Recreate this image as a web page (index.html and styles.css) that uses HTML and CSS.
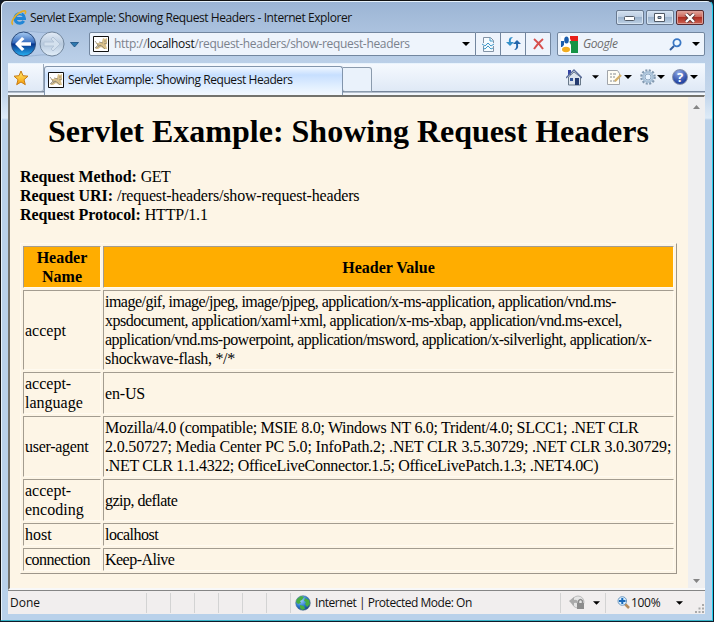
FILE: index.html
```
<!DOCTYPE html>
<html lang="en">
<head>
<meta charset="utf-8">
<title>Servlet Example: Showing Request Headers</title>
<link rel="stylesheet" href="styles.css">
</head>
<body>
<svg class="defs" width="0" height="0" aria-hidden="true">
  <defs>
    <linearGradient id="orb" x1="0" y1="0" x2="0" y2="1"><stop offset="0" stop-color="#a9cdf3"/><stop offset=".45" stop-color="#3269bd"/><stop offset=".5" stop-color="#07338b"/><stop offset="1" stop-color="#28b5f5"/></linearGradient>
    <linearGradient id="glass" x1="0" y1="0" x2="0" y2="1"><stop offset="0" stop-color="#e3ecf7"/><stop offset=".5" stop-color="#b8cade"/><stop offset="1" stop-color="#e3effa"/></linearGradient>
    <linearGradient id="gold" x1="0" y1="0" x2="0" y2="1"><stop offset="0" stop-color="#ffed72"/><stop offset="1" stop-color="#f79b05"/></linearGradient>
    <radialGradient id="sea" cx=".35" cy=".3" r=".75"><stop offset="0" stop-color="#a5d6ff"/><stop offset=".6" stop-color="#2878ce"/><stop offset="1" stop-color="#164581"/></radialGradient>
    <symbol id="cat" viewBox="0 0 16 16"><path fill="#fff" stroke="#111" d="M.5.5h15v15H.5z"/><path fill="#d9c08a" d="M5 7l4-1 1-4 2 1 2-1v5l-1 2 1 4h-3l-3-2-3 2H2l3-3-2-3z"/><path fill="none" stroke="#8f8877" stroke-width=".8" d="M2 5l3 4-3 3m4-6l4 1M5 9l4 1 3 3M3 12l5-3m3-4h2m-2 3l3-1"/></symbol>
    <symbol id="down" viewBox="0 0 8 4"><path d="M0 0h8L4 4z"/></symbol>
  </defs>
</svg>
<div class="window">
  <header class="title-bar">
    <svg class="ie" width="16" height="16" viewBox="0 0 16 16"><path fill="none" stroke="#2186d6" stroke-width="3" d="M12.8 11A4.800 4.800 0 1 1 13.500 8.500H4"/><path fill="none" stroke="#7bcafa" stroke-width=".8" d="M4 7a4.500 4.500 0 0 1 7-3"/><path fill="none" stroke="#e5ad24" stroke-width="1.600" d="M2 14.500C-1 13 3 6 8 3s8-3 6 1"/></svg>
    <span class="title">Servlet Example: Showing Request Headers - Internet Explorer</span>
    <div class="controls">
      <span class="control"><svg width="12" height="6" viewBox="0 0 12 6"><rect x=".5" y="1.500" width="10" height="4" rx="1" fill="#fff" stroke="#505965"/></svg></span>
      <span class="control"><svg width="12" height="10" viewBox="0 0 12 10"><path fill="#fff" fill-rule="evenodd" stroke="#505965" d="M.5.5h10v8h-10zM4 3.500v2h3v-2z"/></svg></span>
      <span class="control close"><svg width="12" height="10" viewBox="0 0 12 10"><path fill="none" stroke="#5c3335" stroke-width="4" d="M2 1l8 8M10 1L2 9"/><path fill="none" stroke="#fff" stroke-width="2.400" d="M2 1l8 8M10 1L2 9"/></svg></span>
    </div>
  </header>
  <nav class="address-row">
    <svg class="travel" width="71" height="26" viewBox="0 0 71 26"><path d="M12 1C22-1 27 3 41 1c8 0 11 5 12 12-1 7-5 12-12 12-10-3-18 1-29 0z" fill="#b4cae7" stroke="#9bb4d4"/><circle cx="12.500" cy="13" r="12" fill="url(#orb)" stroke="#2c4c7b"/><path fill="#fff" d="M11 6l2.500 2-3.500 3.200h10v3.600H10l3.500 3.200-2.500 2-7-7z"/><circle cx="41" cy="13" r="12" fill="url(#glass)" stroke="#75899f"/><path fill="#d4e1ee" stroke="#b3c4d7" d="M42 6l7 7-7 7-2-2 3-3H33v-4h10l-3-3z"/><path fill="#2e78ae" stroke="#184e80" stroke-width=".8" d="M59.500 11.500h8L63.500 16z"/></svg>
    <div class="address"><svg width="16" height="16"><use href="#cat"/></svg><span class="url">http://<b>localhost</b>/request-headers/show-request-headers</span><svg class="arrow" width="8" height="4"><use href="#down"/></svg></div>
    <div class="tool"><svg width="13" height="15" viewBox="0 0 13 15"><path fill="#f5fbff" stroke="#8293a6" d="M1.500 6V.5h7l3 3V6M1.500 9v5.500h10V9"/><path fill="none" stroke="#4099c7" d="M0 7l3 2 3-3 3 3 3-2M1 11l2 1 3-3 3 3 2-1M8 1v3h3"/></svg></div>
    <div class="tool"><svg width="15" height="14" viewBox="0 0 15 14"><path fill="#3490c9" d="M7 0Q2 0 3 5H0l4 4 4-4H5Q4 2 7 0z"/><path fill="#2467ab" d="M8 13q5 0 4-6h3l-4-4-4 4h3q1 4-2 6z"/></svg></div>
    <div class="tool last"><svg width="11" height="12" viewBox="0 0 11 12"><path fill="none" stroke="#d64f4d" stroke-width="2" d="M1 1q5 4 9 10M10 1Q5 5 1 11"/></svg></div>
    <div class="search">
      <svg width="17" height="17" viewBox="0 0 17 17"><path fill="#fff" d="M0 0h17v17H0z"/><path fill="#e8201b" d="M8 0h9v5H10z"/><path fill="#159345" d="M8 5h9v12h-7V9z"/><path fill="#1a5dad" d="M0 5h3v6H0z"/><path fill="#fff" d="M4 0h5v5l-2 3 3 4-1 5H3l-3-5 3-3V0z"/><ellipse cx="5.500" cy="4" rx="2.300" ry="3.500" fill="#1a5dad"/><ellipse cx="5" cy="13.500" rx="4" ry="2.700" fill="#f2ad20"/></svg>
      <span class="engine">Google</span>
      <svg class="lens" width="13" height="13" viewBox="0 0 13 13"><circle cx="8" cy="4.700" r="3.600" fill="#eff8ff" stroke="#3a77c4" stroke-width="1.800"/><path stroke="#315d9e" stroke-width="2" d="M5 8l-4 4"/></svg>
      <svg width="8" height="4"><use href="#down"/></svg>
    </div>
  </nav>
  <div class="tab-row">
    <div class="favorites"><svg width="16" height="16" viewBox="0 0 16 16"><path fill="url(#gold)" stroke="#c87d15" d="M8 1l2 4.700 5 .5-4 3.500 1.300 5L8 12l-4.300 2.700L5 9.700 1 6.200l5-.5z"/></svg></div>
    <div class="tab"><svg width="16" height="16"><use href="#cat"/></svg><span class="tab-title">Servlet Example: Showing Request Headers</span></div>
    <div class="new-tab"></div>
    <div class="commands">
      <svg width="16" height="17" viewBox="0 0 16 17"><path fill="#3544a3" d="M2 1h3v5H2z"/><path fill="#dce3ed" stroke="#697989" d="M2.500 8v8h12V8L8 3z"/><path fill="none" stroke="#5b6d9b" stroke-width="1.300" d="M0 9l8-8 8 8"/><path fill="#36579b" d="M4 9h3v3H4z"/><path fill="#253b70" d="M9 9h4v7H9z"/></svg>
      <svg class="arrow home-arrow" width="7" height="4"><use href="#down"/></svg>
      <svg class="feed" width="15" height="17" viewBox="0 0 15 17"><path fill="#fffdf5" stroke="#a1a5aa" d="M.5 1.500h10l2 3v11H.5z"/><path fill="none" stroke="#858b91" stroke-width="1.100" d="M3 5h2m1 0h3M3 8h2m1 0h2M3 12h2m1 0h3"/><path stroke="#d5b069" stroke-width="2.400" d="M14 6l-6 6"/></svg>
      <svg class="arrow" width="8" height="4"><use href="#down"/></svg>
      <svg class="gear" width="16" height="16" viewBox="0 0 16 16"><circle cx="8" cy="8" r="6.500" fill="none" stroke="#8299b0" stroke-width="2.600" stroke-dasharray="2 1.400"/><circle cx="8" cy="8" r="4.700" fill="none" stroke="#a9c2d9" stroke-width="2.400"/><circle cx="8" cy="8" r="3" fill="#e7f3ff" stroke="#8fa9c3"/></svg>
      <svg class="arrow" width="8" height="4"><use href="#down"/></svg>
      <span class="help">?</span>
      <svg class="arrow" width="8" height="4"><use href="#down"/></svg>
    </div>
  </div>
  <div class="viewport">
    <main class="page">
      <h1>Servlet Example: Showing Request Headers</h1>
      <p><b>Request Method: </b><span class="tight">GET</span><br><b>Request URI: </b><span class="loose">/request-headers/show-request-headers</span><br><b>Request Protocol: </b><span class="loose">HTTP/1.1</span></p>
      <table>
        <colgroup><col class="name-col"><col></colgroup>
        <tr><th>Header<br>Name</th><th>Header Value</th></tr>
        <tr><td>accept</td><td class="tight">image/gif, image/jpeg, image/pjpeg, application/x-ms-application, application/vnd.ms-<br>xpsdocument, application/xaml+xml, application/x-ms-xbap, application/vnd.ms-excel,<br>application/vnd.ms-powerpoint, application/msword, application/x-silverlight, application/x-<br><span class="medium">shockwave-flash, */*</span></td></tr>
        <tr><td>accept-<br>language</td><td class="loose">en-US</td></tr>
        <tr><td class="medium">user-agent</td><td class="medium">Mozilla/4.0 (compatible; MSIE 8.0; Windows NT 6.0; Trident/4.0; SLCC1; .NET CLR<br><span class="loose">2.0.50727; Media Center PC 5.0; InfoPath.2; .NET CLR 3.5.30729; .NET CLR 3.0.30729;</span><br>.NET CLR 1.1.4322; OfficeLiveConnector.1.5; OfficeLivePatch.1.3; .NET4.0C)</td></tr>
        <tr><td>accept-<br>encoding</td><td class="tight">gzip, deflate</td></tr>
        <tr><td>host</td><td class="tight">localhost</td></tr>
        <tr><td class="tight">connection</td><td class="tight">Keep-Alive</td></tr>
      </table>
    </main>
    <div class="scrollbar"><svg width="7" height="4" viewBox="0 0 7 4"><path fill="#858585" d="M0 4h7L3.500 0z"/></svg><svg width="7" height="4" viewBox="0 0 7 4"><path fill="#858585" d="M0 0h7L3.500 4z"/></svg></div>
  </div>
  <footer class="status">
    <span class="done">Done</span>
    <i class="pane"></i><i class="pane"></i><i class="pane"></i><i class="pane"></i><i class="pane"></i><i class="pane"></i>
    <div class="zone"><svg width="16" height="16" viewBox="0 0 16 16"><circle cx="8" cy="8" r="7.300" fill="url(#sea)" stroke="#547493" stroke-width=".6"/><path fill="#47ad42" d="M2 4l4-3 3 1-2 3-2 1 1 2-3 1-2-2zM10 3l4 2 1 4-3 3-2-3 1-2-2-1zM5 10l4 1 1 3-3 1-2-2z"/></svg><span class="zone-text">Internet | Protected Mode: On</span></div>
    <div class="privacy"><svg width="17" height="15" viewBox="0 0 17 15"><circle cx="9" cy="7" r="6" fill="#e5e5e5" stroke="#bbb"/><path fill="#aaa" d="M0 6l5-4v3q4-1 4 4-2-2-4-1v3z"/><path fill="#8c8c8c" d="M8 8h7v6H8z"/><path fill="none" stroke="#8c8c8c" stroke-width="1.500" d="M9.500 9V6q2-3 4 0v3"/></svg><svg width="7" height="4"><use href="#down"/></svg></div>
    <div class="zoom"><svg width="13" height="13" viewBox="0 0 13 13"><path stroke="#b58b59" stroke-width="2.500" d="M8 8l4 4"/><circle cx="5.300" cy="5" r="4.300" fill="#d7eeff" stroke="#719abf"/><path stroke="#1868b8" stroke-width="2" d="M2 5h6.500M5.300 2v6"/></svg><span class="percent">100%</span><svg class="zoom-arrow" width="7" height="4"><use href="#down"/></svg></div>
    <svg class="grip" width="9" height="9" viewBox="0 0 9 9"><path fill="#aaa" d="M7 0h2v2H7zM7 3.500h2v2H7zM3.500 3.500h2v2h-2zM0 7h2v2H0zM3.500 7h2v2h-2zM7 7h2v2H7z"/></svg>
  </footer>
</div>
</body>
</html>
```
FILE: styles.css
```
* { box-sizing: border-box; }
body { margin: 0; width: 714px; height: 622px; overflow: hidden; background: #101c2a; font: 12px/16px "Open Sans", sans-serif; color: #111; }
svg { display: block; flex: none; }
.defs { position: absolute; }
.window { width: 713px; height: 621px; padding: 1px 7px 6px 7px; border: 1px solid #111; border-right-color: #22cfee; border-bottom-color: #38b3c7; border-radius: 6px 6px 0 0; background: linear-gradient(#9bb4d4, #b9cee7 56px, #c4d7ec 95px, #deebf7 117px, #b9d1ea 119px); box-shadow: inset 1px 1px #e7f2fb; }
.title-bar { height: 30px; display: flex; align-items: center; padding-left: 3px; }
.ie { margin-top: 1px; }
.title { margin: 1px 0 0 3px; letter-spacing: -.42px; white-space: nowrap; }
.controls { margin: 0 1px 0 auto; padding-top: 1px; display: flex; gap: 2px; }
.control { width: 28px; height: 15px; border: 1px solid #69798f; border-radius: 2px; background: linear-gradient(#d1dfee, #bccde2 48%, #9bb3cd 50%, #bed1e5); box-shadow: inset 0 0 0 1px #d5e3f2; display: grid; place-items: center; }
.close { border-color: #582c31; background: linear-gradient(#e1a59b, #ca6459 48%, #ae2d22 50%, #cd6555); box-shadow: inset 0 0 0 1px #dc9e98; }
.address-row { display: flex; height: 31px; align-items: flex-start; }
.travel { margin: -1px 7px 0 3px; }
.address, .search, .tool { flex: none; height: 24px; border: 1px solid #72869f; background: #eef4fc; display: flex; align-items: center; }
.address { width: 387px; padding: 0 5px 0 3px; border-radius: 2px 0 0 2px; }
.url { margin-left: 5px; color: #7b828d; letter-spacing: -.32px; white-space: nowrap; }
.url b { color: #111; font-weight: 400; }
.address .arrow { margin-left: auto; }
.tool { width: 25px; border-left: 0; justify-content: center; }
.search { width: 148px; margin-left: 6px; padding: 0 4px 0 3px; border-radius: 2px; }
.last { border-radius: 0 2px 2px 0; }
.engine { margin-left: 5px; font-style: italic; letter-spacing: -.4px; color: #6d6d6d; }
.lens { margin: 0 10px 0 auto; }
.tab-row { height: 32px; border-top: 1px solid #e8f3fd; background: linear-gradient(#f5f9fe, #dfe9f6 27px, #76859a 27px, #76859a 28px, #f2f7fd 29px); display: flex; align-items: flex-start; }
.favorites { width: 36px; height: 28px; border-right: 1px solid #9aa9bb; border-bottom: 1px solid #8796a8; border-radius: 0 0 3px 0; padding: 6px 0 0 5px; }
.tab { width: 299px; height: 29px; margin-top: 2px; border: 1px solid #8295ac; border-bottom: 0; border-radius: 3px 3px 0 0; background: linear-gradient(#f0f7ff, #c7dfff 8px, #e3f0ff 20px, #f4f9ff); display: flex; align-items: center; padding: 0 0 3px 3px; }
.tab-title { margin-left: 4px; letter-spacing: -.43px; white-space: nowrap; }
.new-tab { width: 29px; height: 25px; margin-top: 3px; border: 1px solid #8b9bad; border-left: 0; border-radius: 0 3px 0 3px; background: #eaf2fb; }
.commands { margin-left: auto; height: 26px; display: flex; align-items: center; padding-right: 7px; }
.home-arrow { margin-left: 10px; }
.feed { margin-left: 8px; }
.feed + .arrow { margin-left: 2px; }
.gear { margin-left: 8px; }
.gear + .arrow { margin-left: 1px; }
.help { width: 16px; height: 16px; margin: 0 2px 0 7px; border: 1px solid #848fa9; border-radius: 50%; background: radial-gradient(circle at 40% 20%, #8ea7e4, #2747a4 70%); color: #fff; font: 700 13px/14px "Open Sans", sans-serif; text-align: center; }
.viewport { height: 495px; border-top: 2px solid #74736d; border-left: 2px solid #74736d; border-bottom: 2px solid #f8f8f8; border-right: 1px solid #fff; display: flex; background: #fdf5e6; }
.page { flex: none; width: 678px; padding: 18px 0 0 10px; color: #000; font: 16px/19px "Liberation Serif", serif; }
h1 { margin: 0; width: 657px; font-size: 32px; line-height: 32px; text-align: center; white-space: nowrap; }
p { margin: 20px 0 19px; }
p b { letter-spacing: -.07px; }
table { width: 657px; table-layout: fixed; border-spacing: 2px; border: 1px solid; border-color: #fffaf0 #9d968b #9d968b #fffaf0; }
.name-col { width: 78px; }
td, th { padding: 1px; border: 1px solid; border-color: #a39c90 #fffaf0 #fffaf0 #a39c90; white-space: nowrap; }
th { background: #ffad00; }
.tight { letter-spacing: -.52px; }
.medium { letter-spacing: -.3px; }
.loose { letter-spacing: -.17px; }
.scrollbar { flex: 1; background: #efeff0; padding: 8px 5px 5px; display: flex; flex-direction: column; justify-content: space-between; align-items: center; }
.status { height: 24px; background: #f1eeee; border-top: 1px solid #858585; display: flex; align-items: center; }
.status > * { flex: none; }
.done { width: 138px; padding-left: 2px; }
.pane { width: 24px; height: 20px; border-left: 1px solid #d3d3d3; }
.zone { height: 20px; width: 270px; padding-left: 4px; border-left: 1px solid #d3d3d3; display: flex; align-items: center; }
.zone-text { margin-left: 4px; letter-spacing: -.47px; white-space: nowrap; }
.privacy { width: 45px; height: 20px; border-left: 1px solid #d3d3d3; padding: 0 5px 0 8px; display: flex; align-items: center; justify-content: space-between; }
.zoom { width: 85px; height: 20px; border-left: 1px solid #d3d3d3; padding: 0 7px 0 11px; display: flex; align-items: center; }
.percent { margin-left: 1px; letter-spacing: -.3px; }
.zoom-arrow { margin-left: auto; }
.grip { margin: 11px 1px 0 auto; }
```
